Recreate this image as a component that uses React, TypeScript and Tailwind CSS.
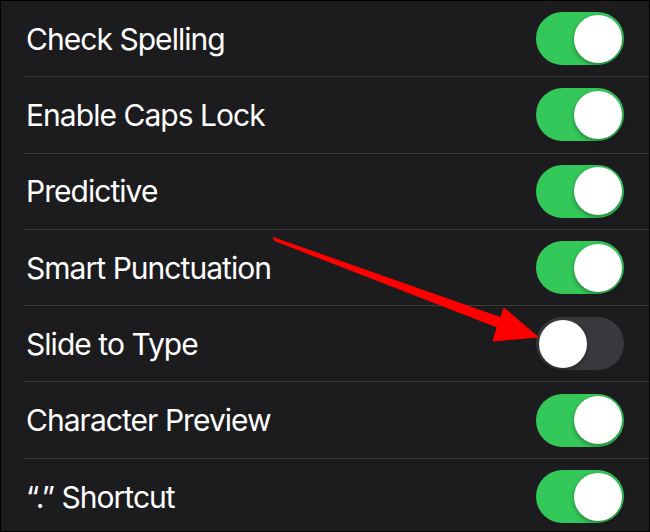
import React from 'react';

const rows = [
  { label: 'Check Spelling', on: true },
  { label: 'Enable Caps Lock', on: true },
  { label: 'Predictive', on: true },
  { label: 'Smart Punctuation', on: true },
  { label: 'Slide to Type', on: false },
  { label: 'Character Preview', on: true },
  { label: '\u201C.\u201D Shortcut', on: true },
];

function Toggle({ on }: { on: boolean }) {
  return (
    <div
      className={
        on
          ? 'w-[88px] h-[53px] rounded-full bg-[#34c759] p-[2.5px] flex justify-end flex-shrink-0'
          : 'w-[88px] h-[53px] rounded-full bg-[#39393d] p-[2.5px] flex justify-start flex-shrink-0'
      }
    >
      <div className="w-[48px] h-[48px] rounded-full bg-white shadow-[0_2px_4px_rgba(0,0,0,0.35)]" />
    </div>
  );
}

export default function App() {
  return (
    <div
      className="relative w-[650px] h-[532px] overflow-hidden border border-black bg-[#1c1c1e]"
      style={{ fontFamily: 'Inter, "Noto Sans", sans-serif' }}
    >
      <div className="flex flex-col">
        {rows.map((r, i) => (
          <div
            key={r.label}
            className={
              i < rows.length - 1
                ? 'ml-[23px] pr-[25px] h-[76.3px] flex-shrink-0 flex items-center justify-between border-b border-[#3a3a3c]'
                : 'ml-[23px] pr-[25px] h-[76.3px] flex-shrink-0 flex items-center justify-between'
            }
          >
            <span className="text-white text-[30px] leading-none tracking-[-0.032em] pl-[2px]">{r.label}</span>
            <Toggle on={r.on} />
          </div>
        ))}
      </div>

      {/* red arrow pointing at the Slide to Type switch */}
      <svg className="absolute left-0 top-0 pointer-events-none" width="650" height="532" viewBox="0 0 650 532">
        <polygon
          points="272,236.5 499.7,316.7 503,307 537,336 492,340 496.3,326.1 273.5,239.5"
          fill="#ff0000"
          stroke="#ff0000"
          strokeWidth="1"
          strokeLinejoin="round"
        />
      </svg>
    </div>
  );
}
